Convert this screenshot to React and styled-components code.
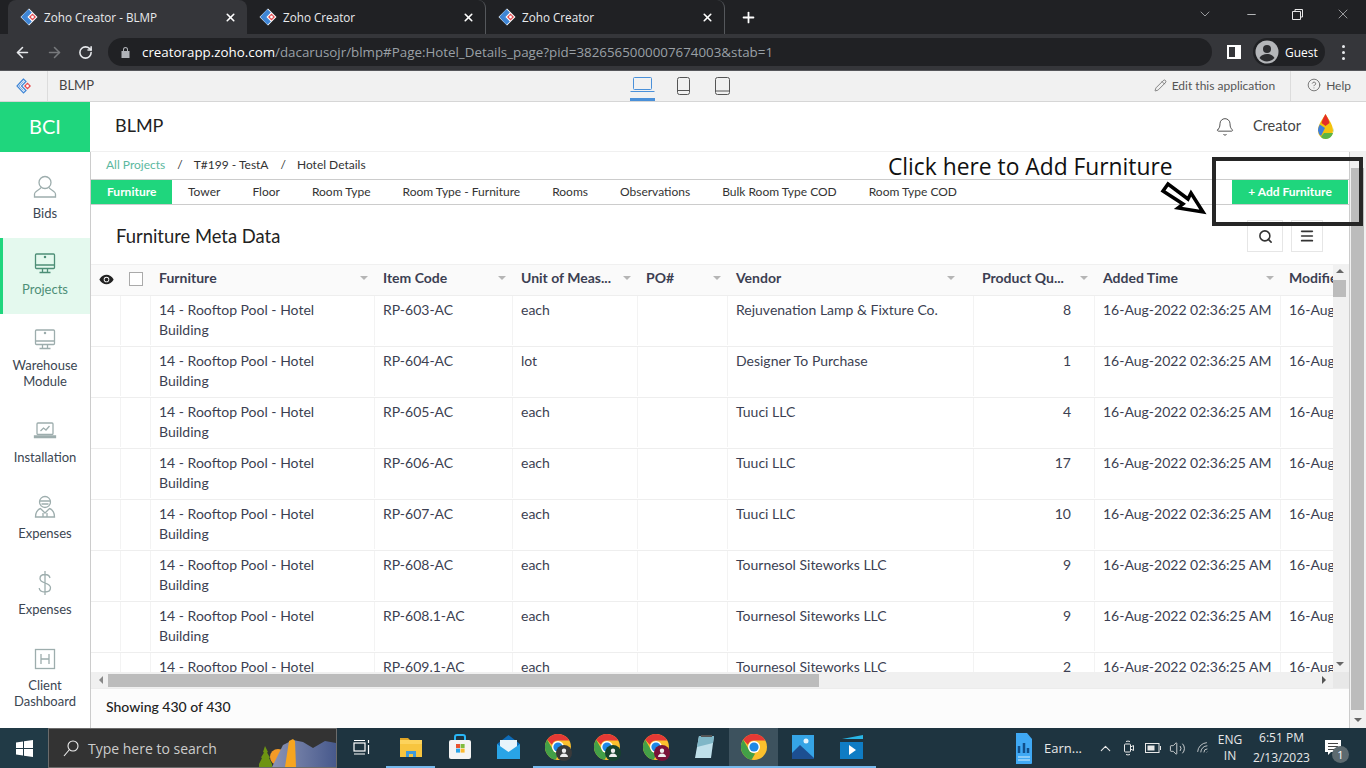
import React from "react";
import styled, { createGlobalStyle } from "styled-components";
import { ArrowLeft, ArrowRight, RotateCw, X, Plus, ChevronDown, Minus, Bell, Search, Menu, Pencil, CircleHelp, ChevronUp, Volume2, Wifi } from "lucide-react";
import { IoEye } from "react-icons/io5";

const GREEN = "#1fd67d";
const UI_FONT = `"Open Sans", "Noto Sans", sans-serif`;
const COLUMNS = "30px 30px 224px 138px 125px 90px 246px 121px 186px 120px";

const Global = createGlobalStyle`
  html, body { margin: 0; padding: 0; height: 100%; overflow: hidden; background: #fff; }
  #root { height: 100%; }
  * { box-sizing: border-box; }
  body { font-family: Lato, "Liberation Sans", sans-serif; }
`;

const Screen = styled.div`
  display: flex;
  flex-direction: column;
  position: relative;
  width: 1366px;
  height: 768px;
  overflow: hidden;
`;

/* browser chrome */
const TabStrip = styled.div`
  display: flex;
  align-items: stretch;
  height: 34px;
  padding-left: 8px;
  background: #202124;
  color: #fff;
  font: 11.7px ${UI_FONT};
`;
const BrowserTab = styled.div`
  display: flex;
  align-items: center;
  width: 239px;
  padding: 0 10px 0 12px;
  gap: 6px;
  background: ${(p) => (p.$active ? "#35363a" : "transparent")};
  border-radius: 8px 8px 0 0;
  border-right: ${(p) => (p.$divider ? "1px solid #55585c" : "none")};
  span { flex: 1; white-space: nowrap; color: #e8eaed; }
`;
const NewTab = styled.div`
  display: flex;
  align-items: center;
  padding-left: 15px;
  flex: 1;
`;
const WindowControls = styled.div`
  display: flex;
  align-items: center;
  color: #d5d7da;
  padding-bottom: 6px;
`;
const WindowButton = styled.div`
  width: 46px;
  display: flex;
  justify-content: center;
`;
const Toolbar = styled.div`
  display: flex;
  align-items: center;
  height: 36px;
  background: #35363a;
  color: #e8eaed;
  padding-left: 14px;
`;
const NavButton = styled.div`
  width: 32px;
  display: flex;
  color: ${(p) => (p.$off ? "#77797c" : "#e8eaed")};
`;
const Omnibox = styled.div`
  display: flex;
  align-items: center;
  width: 1104px;
  height: 28px;
  margin-left: -2px;
  padding-left: 13px;
  gap: 12px;
  border-radius: 14px;
  background: #202124;
  font: 13.35px ${UI_FONT};
  color: #9aa0a6;
  white-space: nowrap;
  b { font-weight: 400; color: #fff; }
`;
const PanelIcon = styled.div`
  width: 14px;
  height: 14px;
  margin-left: 15px;
  border: 2px solid #fff;
  border-right-width: 6px;
`;
const GuestPill = styled.div`
  display: flex;
  align-items: center;
  gap: 6px;
  width: 72px;
  height: 28px;
  margin-left: 12px;
  padding-left: 2px;
  border-radius: 14px;
  background: #202124;
  font: 12px ${UI_FONT};
  color: #fff;
`;
const Kebab = styled.div`
  display: flex;
  flex-direction: column;
  gap: 3px;
  margin-left: 17px;
  i { width: 3px; height: 3px; border-radius: 50%; background: #e8eaed; }
`;

/* zoho app bar */
const AppBar = styled.div`
  display: flex;
  align-items: center;
  height: 32px;
  background: #f1f1f1;
  border-bottom: 1px solid #d6d6d6;
  border-top: 1px solid #55565a;
  font-size: 12px;
  color: #555;
`;
const AppLogoCell = styled.div`
  display: flex;
  align-items: center;
  justify-content: center;
  width: 48px;
  height: 100%;
  border-right: 1px solid #dcdcdc;
`;
const AppName = styled.div`
  margin-left: 11px;
  width: 571px;
  padding-bottom: 2px;
  font-size: 13px;
  color: #444;
`;
const Devices = styled.div`
  display: flex;
  align-items: center;
  gap: 20px;
  height: 100%;
  flex: 1;
`;
const DeviceButton = styled.div`
  display: flex;
  align-items: center;
  justify-content: center;
  height: 100%;
  width: ${(p) => p.$w}px;
  color: ${(p) => (p.$active ? "#4a90d9" : "#555")};
  border-bottom: ${(p) => (p.$active ? "3px solid #4a90d9" : "none")};
`;
const AppAction = styled.div`
  display: flex;
  align-items: center;
  gap: 5px;
  height: 100%;
  padding: 0 15px 2px ${(p) => p.$left || 15}px;
  border-left: ${(p) => (p.$line ? "1px solid #dcdcdc" : "none")};
`;

/* page header */
const PageHeader = styled.div`
  display: flex;
  align-items: center;
  height: 50px;
  border-bottom: 1px solid #f0f0f0;
`;
const Brand = styled.div`
  display: flex;
  align-items: center;
  justify-content: center;
  width: 90px;
  height: 50px;
  padding-bottom: 2px;
  background: ${GREEN};
  color: #fff;
  font-size: 20px;
`;
const HeaderTitle = styled.div`
  flex: 1;
  margin-left: 25px;
  font-size: 18px;
  color: #222;
  padding-bottom: 4px;
`;
const HeaderUser = styled.div`
  display: flex;
  align-items: center;
  padding-right: 32px;
  font-size: 14.5px;
  color: #444;
`;
const UserName = styled.span`
  margin: 0 16px 0 18px;
  padding-bottom: 3px;
`;

const Middle = styled.div`
  display: flex;
  height: 576px;
`;
const Sidebar = styled.nav`
  width: 91px;
  flex: none;
  padding-top: 10px;
  border-right: 1px solid #ccc;
`;
const SideItem = styled.div`
  display: flex;
  flex-direction: column;
  align-items: center;
  padding: 12px ${(p) => (p.$active ? "3px" : "0")} 17px 0;
  gap: 5px;
  text-align: center;
  font-size: 13px;
  line-height: 16px;
  color: ${(p) => (p.$active ? "#4d8f77" : "#3b4652")};
  background: ${(p) => (p.$active ? "#e4f9ee" : "transparent")};
  border-left: ${(p) => (p.$active ? `3px solid ${GREEN}` : "none")};
  svg { flex: none; }
`;

const Content = styled.main`
  display: flex;
  flex-direction: column;
  width: 1258px;
  flex: none;
`;
const Crumbs = styled.div`
  display: flex;
  align-items: center;
  height: 27px;
  padding: 0 0 2px 15px;
  font-size: 12px;
  color: #333;
`;
const CrumbLink = styled.span`
  color: #5bb8a0;
`;
const CrumbSep = styled.span`
  margin: 0 11px 0 12px;
`;
const TabRow = styled.div`
  display: flex;
  align-items: stretch;
  height: 26px;
  border-top: 1px solid #ccc;
  border-bottom: 1px solid #ccc;
  font-size: 12px;
  color: #333;
`;
const PageTab = styled.div`
  display: flex;
  align-items: center;
  padding: 0 16px 1px;
  width: ${(p) => (p.$active ? "81px" : "auto")};
  white-space: nowrap;
  background: ${(p) => (p.$active ? GREEN : "transparent")};
  color: ${(p) => (p.$active ? "#fff" : "#333")};
  font-weight: ${(p) => (p.$active ? 700 : 400)};
`;
const AddButton = styled.div`
  display: flex;
  align-items: center;
  justify-content: center;
  margin-left: auto;
  margin-right: 1px;
  width: 116px;
  padding-bottom: 1px;
  background: ${GREEN};
  color: #fff;
  font-weight: 700;
`;
const TitleRow = styled.div`
  display: flex;
  align-items: center;
  height: 59px;
  padding: 0 26px 0 25px;
  gap: 8px;
`;
const TableTitle = styled.h1`
  flex: 1;
  margin: 2px 0 0;
  font-size: 18.4px;
  font-weight: 400;
  color: #222;
`;
const SquareButton = styled.div`
  display: flex;
  align-items: center;
  justify-content: center;
  width: ${(p) => p.$w}px;
  height: 32px;
  margin-top: 3px;
  border: 1px solid #e6e6e6;
  color: #333;
`;

const TableArea = styled.div`
  display: grid;
  grid-template-columns: 1242px 16px;
  grid-template-rows: 408px 16px;
  height: 424px;
`;
const TableClip = styled.div`
  overflow: hidden;
`;
const HeadRow = styled.div`
  display: grid;
  grid-template-columns: ${COLUMNS};
  height: 31px;
  background: #fafafa;
  border-top: 1px solid #f0f0f0;
  font-size: 14px;
  font-weight: 700;
  color: #3c3f52;
`;
const HeadCell = styled.div`
  position: relative;
  display: flex;
  align-items: center;
  padding: 0 0 5px 8px;
  white-space: nowrap;
  overflow: hidden;
  &::after {
    content: "";
    display: ${(p) => (p.$plain ? "none" : "block")};
    position: absolute;
    right: ${(p) => p.$caret || 7}px;
    top: 11px;
    border: 4px solid transparent;
    border-top-color: #b5b5b5;
    border-bottom: none;
  }
`;
const IconCell = styled.div`
  display: flex;
  align-items: center;
  justify-content: center;
  padding-bottom: 2px;
  color: #222;
`;
const CheckBox = styled.div`
  width: 14px;
  height: 14px;
  border: 1px solid #aaa;
  background: #fff;
`;
const Row = styled.div`
  display: grid;
  grid-template-columns: ${COLUMNS};
  height: 51px;
  border-top: 1px solid #eee;
  border-bottom: 1px solid transparent;
  font-size: 14px;
  line-height: 20px;
  color: #3c3f52;
`;
const Cell = styled.div`
  padding: 4px 8px 0;
  border-right: 1px solid #f3f3f3;
  white-space: ${(p) => (p.$nowrap ? "nowrap" : "normal")};
  overflow: hidden;
  text-align: ${(p) => (p.$right ? "right" : "left")};
  padding-right: ${(p) => (p.$right ? "23px" : "8px")};
`;
const VBar = styled.div`
  display: flex;
  flex-direction: column;
  align-items: stretch;
  background: #f1f1f1;
  padding-right: 3px;
`;
const HBar = styled.div`
  display: flex;
  align-items: center;
  background: #f0f0f0;
  height: 16px;
`;
const Corner = styled.div`
  background: #e8e8e8;
`;
const Thumb = styled.div`
  background: #bcbcbc;
  width: ${(p) => p.$w || "auto"};
  height: ${(p) => p.$h || "auto"};
`;
const Tri = styled.i`
  display: block;
  width: 0;
  height: 0;
  border: 4px solid transparent;
  ${(p) => p.$dir === "up" && "border-bottom-color:#666;border-top:none;margin:5px auto 7px;"}
  ${(p) => p.$dir === "down" && "border-top-color:#666;border-bottom:none;margin:auto auto 6px;"}
  ${(p) => p.$dir === "left" && "border-right-color:#888;border-left:none;margin:0 5px 0 8px;"}
  ${(p) => p.$dir === "right" && "border-left-color:#555;border-right:none;margin-left:503px;"}
`;
const Footer = styled.div`
  display: flex;
  align-items: center;
  height: 40px;
  padding: 0 0 5px 15px;
  background: #fcfcfc;
  border-top: 1px solid #ececec;
  font-size: 14px;
  font-weight: 500;
  color: #222;
`;
const PageScroll = styled.div`
  display: flex;
  flex-direction: column;
  width: 17px;
  background: #f1f1f1;
  border-left: 1px solid #ccc;
  padding: 0 2px 0 1px;
`;

/* taskbar */
const Taskbar = styled.footer`
  display: flex;
  align-items: stretch;
  height: 40px;
  background: #1e3440;
  color: #fff;
  font: 12px ${UI_FONT};
`;
const StartButton = styled.div`
  display: flex;
  align-items: center;
  justify-content: center;
  width: 48px;
  background: #213a46;
`;
const SearchBox = styled.div`
  display: flex;
  align-items: center;
  width: 289px;
  padding-left: 14px;
  gap: 9px;
  background: #333;
  border: 1px solid #6b6b6b;
  font-size: 14px;
  color: #ccc;
  overflow: hidden;
  span { flex: 1; white-space: nowrap; }
  svg:last-child { flex: none; }
`;
const TaskItem = styled.div`
  display: flex;
  align-items: center;
  justify-content: center;
  width: 49px;
  background: ${(p) => (p.$focused ? "#3d525e" : "transparent")};
  border-bottom: 2px solid ${(p) => (p.$running ? "#76b9ed" : "transparent")};
  background-clip: padding-box;
`;
const Tray = styled.div`
  display: flex;
  align-items: center;
  margin-left: auto;
  color: #e8e8e8;
`;
const DocItem = styled.div`
  display: flex;
  align-items: center;
  gap: 11px;
  width: 78px;
  font-size: 13px;
  white-space: nowrap;
`;
const TrayIcon = styled.div`
  display: flex;
  justify-content: center;
  width: ${(p) => p.$w || 24}px;
`;
const TrayText = styled.div`
  text-align: center;
  line-height: ${(p) => p.$lh}px;
  width: ${(p) => p.$w}px;
  white-space: nowrap;
`;
const Notice = styled.div`
  position: relative;
  display: flex;
  width: 46px;
  padding-left: 5px;
`;
const NoticeBadge = styled.span`
  position: absolute;
  left: 12px;
  bottom: -7px;
  width: 17px;
  height: 17px;
  border-radius: 50%;
  background: #5d6a70;
  color: #fff;
  font-size: 11px;
  line-height: 17px;
  text-align: center;
`;

/* annotations drawn over the screenshot */
const CalloutBox = styled.div`
  position: absolute;
  left: 1212px;
  top: 157px;
  width: 151px;
  height: 69px;
  border: 4px solid #262626;
  pointer-events: none;
`;
const CalloutText = styled.div`
  position: absolute;
  left: 888px;
  top: 151px;
  font: 22.8px ${UI_FONT};
  color: #111;
  white-space: nowrap;
`;
const CalloutArrow = styled.svg`
  position: absolute;
  left: 1158px;
  top: 181px;
`;

const ZohoMark = ({ onDark }) => (
  <svg width="18" height="18" viewBox="0 0 18 18">
    {onDark && <path d="M9 .5 17.500 9 9 17.500.5 9z" fill="#fff" />}
    <path d="M8.500 2 2 9l6.500 7 2.500-2.500L6.500 9 11 4.500z" fill={onDark ? "#3f86d6" : "#eef3fa"} stroke="#3f86d6" strokeWidth="1.200" />
    {!onDark && <path d="M8.500 4.500 4 9l4.500 4.500" fill="none" stroke="#8fb6e0" />}
    <path d="M12.500 5.500 16 9l-3.500 3.500L9 9z" fill="#e5484d" />
    <circle cx="12.500" cy="9" r="1.400" fill="#fff" />
  </svg>
);

const ChromeLogo = ({ size = 28, badge }) => (
  <svg width={size} height={size} viewBox="0 0 28 28">
    <circle cx="14" cy="14" r="13" fill="#fbc02d" />
    <path d="M14 1a13 13 0 0 1 11.300 6.500H14a6.500 6.500 0 0 0-6.100 4.300L3.200 6.700A13 13 0 0 1 14 1z" fill="#e53935" />
    <path d="M3.200 6.700l5.600 9.900a6.500 6.500 0 0 0 6.400 3.800l-3.600 6.400A13 13 0 0 1 3.200 6.700z" fill="#43a047" />
    <circle cx="14" cy="14" r="6" fill="#fff" />
    <circle cx="14" cy="14" r="4.600" fill="#1e88e5" />
    {badge && <circle cx="20" cy="20" r="8" fill={badge} />}
    {badge && <path d="M20 15.500a2.200 2.200 0 1 1 0 4.400 2.200 2.200 0 0 1 0-4.400zM16 24c0-2.200 1.800-3.400 4-3.400s4 1.200 4 3.400z" fill="#eee" />}
  </svg>
);

const Line = ({ w = 26, h = 26, vb = "0 0 26 26", color = "#9dadad", children }) => (
  <svg width={w} height={h} viewBox={vb} fill="none" stroke={color} strokeWidth="1.300">{children}</svg>
);

const Monitor = ({ color }) => (
  <Line color={color}>
    <rect x="3.500" y="4" width="19" height="14.500" rx="1" />
    <path d="M3.500 15h19M10.500 18.500v4M15.500 18.500v4M7.500 22.500h11" />
    <circle cx="13" cy="7" r=".6" />
  </Line>
);

const NAV = [
  { label: "Bids", icon: <Line><circle cx="13" cy="8.500" r="6" /><path d="M9 13.500c-1 2.500-6.500 3-6.500 7v2.500h21v-2.500c0-4-5.500-4.500-6.500-7" /></Line> },
  { label: "Projects", active: true, icon: <Monitor color="#4d8f77" /> },
  { label: "Warehouse Module", icon: <Monitor /> },
  { label: "Installation", icon: <Line><rect x="5" y="5" width="16" height="11.500" rx="1" /><path d="M2.500 19.500h21v-1.500h-21zM8.500 13l3-3 2.500 2 3.500-4" /></Line> },
  { label: "Expenses", icon: <Line><circle cx="13" cy="8" r="5.500" /><path d="M7.500 7h11M9.500 10h7M8.500 14.500c-2 1-5 2-5 8.500h19c0-6.500-3-7.500-5-8.500l-4.500 4.500zM11 19v4M15 19v4" /></Line> },
  { label: "Expenses", icon: <Line><path d="M18 8c-.5-2.500-2.500-3.500-5-3.500-3 0-5 1.500-5 4s2 3.500 5 4.500 5.500 2 5.500 4.800c0 2.700-2.500 4.200-5.500 4.200s-5.500-1.300-5.800-4M13 1v24" /></Line> },
  { label: "Client Dashboard", icon: <Line><rect x="3.500" y="3.500" width="19" height="19" /><path d="M9 8v10M17 8v10M9 13h8" /></Line> },
];

const ROWS = [
  ["RP-603-AC", "each", "Rejuvenation Lamp & Fixture Co.", 8],
  ["RP-604-AC", "lot", "Designer To Purchase", 1],
  ["RP-605-AC", "each", "Tuuci LLC", 4],
  ["RP-606-AC", "each", "Tuuci LLC", 17],
  ["RP-607-AC", "each", "Tuuci LLC", 10],
  ["RP-608-AC", "each", "Tournesol Siteworks LLC", 9],
  ["RP-608.1-AC", "each", "Tournesol Siteworks LLC", 9],
  ["RP-609.1-AC", "each", "Tournesol Siteworks LLC", 2],
];

const TABS = ["Tower", "Floor", "Room Type", "Room Type - Furniture", "Rooms", "Observations", "Bulk Room Type COD", "Room Type COD"];
const HEADS = [
  { label: "Furniture" },
  { label: "Item Code" },
  { label: "Unit of Meas..." },
  { label: "PO#" },
  { label: "Vendor", caret: 19 },
  { label: "Product Qu..." },
  { label: "Added Time" },
];

const Folder = () => (
  <svg width="24" height="22" viewBox="0 0 24 22">
    <path d="M1 2h8l2 2H1z" fill="#e0a526" />
    <rect x="1" y="4" width="22" height="17" fill="#fcd35c" />
    <rect x="1" y="8" width="22" height="13" fill="#f7c53f" />
    <path d="M7 15h10v6h-3v-3h-4v3H7z" fill="#3f9bdc" />
  </svg>
);
const Store = () => (
  <svg width="24" height="26" viewBox="0 0 24 26">
    <path d="M7 6V3a2 2 0 0 1 2-2h6a2 2 0 0 1 2 2v3" fill="none" stroke="#29b6f6" strokeWidth="2" />
    <rect x="1" y="6" width="22" height="19" rx="2" fill="#f4f4f4" />
    <rect x="8" y="10" width="4" height="4" fill="#e9532f" /><rect x="12.600" y="10" width="4" height="4" fill="#7fbb3f" />
    <rect x="8" y="14.600" width="4" height="4" fill="#2aa4e8" /><rect x="12.600" y="14.600" width="4" height="4" fill="#fbb92f" />
  </svg>
);
const Mail = () => (
  <svg width="25" height="26" viewBox="0 0 25 26">
    <path d="M12.500 1 24 10v15H1V10z" fill="#0d6cb9" />
    <rect x="4" y="6" width="17" height="13" fill="#e8f4fb" />
    <path d="M1 10l11.500 8L24 10v15H1z" fill="#29a4e6" />
  </svg>
);
const Notepad = () => (
  <svg width="24" height="26" viewBox="0 0 24 26">
    <path d="M6 2h15l-3 22H2z" fill="#bfe0ea" />
    <path d="M6 2h15l-1 7-16 4z" fill="#7fb7c7" />
    <path d="M8 2h11" stroke="#555" strokeWidth="2" />
  </svg>
);
const Photos = () => (
  <svg width="24" height="26" viewBox="0 0 24 26">
    <rect x="1" y="1" width="22" height="24" fill="#35a4e6" />
    <circle cx="15" cy="7" r="2.500" fill="#e6f4fc" />
    <path d="M1 19l8-8 14 13v1H1z" fill="#1d4f91" />
  </svg>
);
const Movies = () => (
  <svg width="25" height="26" viewBox="0 0 25 26">
    <path d="M3 5 24 1v4H3z" fill="#29b6e6" />
    <path d="M1 8h23v17H1z" fill="#0f7cc4" />
    <path d="M10 11v10l7-5z" fill="#fff" />
  </svg>
);
const TaskView = () => (
  <svg width="18" height="17" viewBox="0 0 18 17" fill="none" stroke="#fff" strokeWidth="1.200">
    <rect x="1" y="4" width="11" height="8" />
    <path d="M1 1.500h11M1 15h11M15.500 1v3M15.500 6v9" />
  </svg>
);
const SearchArt = () => (
  <svg width="77" height="38" viewBox="0 0 77 38">
    <defs>
      <linearGradient id="rock" x1="0" x2="1" y1="0" y2="0">
        <stop offset="0" stopColor="#8a93b5" />
        <stop offset="1" stopColor="#47598c" />
      </linearGradient>
    </defs>
    <circle cx="19" cy="28" r="8" fill="#f39a26" />
    <path d="M13 38 24 16l10-5 10 2 10 6 12-7 11 2v24z" fill="url(#rock)" />
    <path d="M30 12l4-2 2 2 1 26h-11z" fill="#f7a51f" />
    <path d="M6 17l3 6 -1 .5 3 5-1 .5 3 6v3H0v-3l3-6-1-.5 3-5-1-.5z" fill="#6d9412" />
  </svg>
);

export default function App() {
  return (
    <Screen>
      <Global />
      <TabStrip>
        <BrowserTab $active><ZohoMark onDark /><span>Zoho Creator - BLMP</span><X size={13} strokeWidth={3} /></BrowserTab>
        <BrowserTab $divider><ZohoMark onDark /><span>Zoho Creator</span><X size={13} strokeWidth={3} /></BrowserTab>
        <BrowserTab $divider><ZohoMark onDark /><span>Zoho Creator</span><X size={13} strokeWidth={3} /></BrowserTab>
        <NewTab><Plus size={17} strokeWidth={2.500} /></NewTab>
        <WindowControls>
          <WindowButton><ChevronDown size={16} strokeWidth={1} /></WindowButton>
          <WindowButton><Minus size={13} strokeWidth={1.500} /></WindowButton>
          <WindowButton>
            <svg width="11" height="11" viewBox="0 0 11 11" fill="none" stroke="#e8e8e8"><path d="M3 2.500V.5h7.500V8H8.500M.5 2.500h8v8h-8z" /></svg>
          </WindowButton>
          <WindowButton><X size={16} strokeWidth={1} /></WindowButton>
        </WindowControls>
      </TabStrip>

      <Toolbar>
        <NavButton><ArrowLeft size={17} strokeWidth={2.200} /></NavButton>
        <NavButton $off><ArrowRight size={17} strokeWidth={2.200} /></NavButton>
        <NavButton><RotateCw size={15} strokeWidth={2.500} /></NavButton>
        <Omnibox>
          <svg width="9" height="12" viewBox="0 0 9 12"><path d="M2 5V3.500a2.500 2.500 0 0 1 5 0V5h1.500v7H.5V5zm1 0h3V3.500a1.500 1.500 0 0 0-3 0z" fill="#b0b3b8" /></svg>
          <div><b>creatorapp.zoho.com</b>/dacarusojr/blmp#Page:Hotel_Details_page?pid=3826565000007674003&amp;stab=1</div>
        </Omnibox>
        <PanelIcon />
        <GuestPill>
          <svg width="24" height="24" viewBox="0 0 24 24"><circle cx="12" cy="12" r="11.500" fill="#b4b6b9" /><circle cx="12" cy="9" r="4" fill="#2b2c2f" /><path d="M4.500 18c1.500-3 4.500-4 7.500-4s6 1 7.500 4a10 10 0 0 1-15 0z" fill="#2b2c2f" /></svg>
          Guest
        </GuestPill>
        <Kebab><i /><i /><i /></Kebab>
      </Toolbar>

      <AppBar>
        <AppLogoCell><ZohoMark /></AppLogoCell>
        <AppName>BLMP</AppName>
        <Devices>
          <DeviceButton $active $w={25}>
            <svg width="25" height="17" viewBox="0 0 25 17" fill="none" stroke="currentColor"><rect x="3.500" y="1.500" width="18" height="12" rx="1" /><path d="M.5 15.500h24" /></svg>
          </DeviceButton>
          <DeviceButton $w={16}>
            <svg width="13" height="18" viewBox="0 0 13 18" fill="none" stroke="currentColor"><rect x=".5" y=".5" width="12" height="17" rx="2" /><path d="M.5 13.500h12" /></svg>
          </DeviceButton>
          <DeviceButton $w={22}>
            <svg width="15" height="18" viewBox="0 0 15 18" fill="none" stroke="currentColor"><rect x=".5" y=".5" width="14" height="17" rx="2" /><path d="M.5 14h14" /></svg>
          </DeviceButton>
        </Devices>
        <AppAction><Pencil size={13} strokeWidth={1.300} />Edit this application</AppAction>
        <AppAction $line $left={16}><CircleHelp size={14} strokeWidth={1.300} />Help</AppAction>
      </AppBar>

      <PageHeader>
        <Brand>BCI</Brand>
        <HeaderTitle>BLMP</HeaderTitle>
        <HeaderUser>
          <Bell size={20} strokeWidth={1.100} />
          <UserName>Creator</UserName>
          <svg width="17" height="26" viewBox="0 0 17 26">
            <path d="M8.500 0C6.500 4 1 10 1 16.500a7.500 8.500 0 0 0 15 0C16 10 10.500 4 8.500 0z" fill="#f4c20d" />
            <path d="M8.500 0C7 3 5 6 4.500 9l4 3 4-3C12 6 10 3 8.500 0z" fill="#e52d27" />
            <path d="M1 16.500c0-2 .8-4 1.800-6L8 14 4 22a8 8 0 0 1-3-5.500z" fill="#3f7fdc" />
            <path d="M16 14a7.500 8.500 0 0 1-7.500 11c-2 0-3.500-.8-4.500-2l3-4h9z" fill="#5cb547" />
          </svg>
        </HeaderUser>
      </PageHeader>

      <Middle>
        <Sidebar>
          {NAV.map((item, i) => (
            <SideItem key={i} $active={item.active}>{item.icon}<div>{item.label}</div></SideItem>
          ))}
        </Sidebar>
        <Content>
          <Crumbs>
            <CrumbLink>All Projects</CrumbLink><CrumbSep>/</CrumbSep>T#199 - TestA<CrumbSep>/</CrumbSep>Hotel Details
          </Crumbs>
          <TabRow>
            <PageTab $active>Furniture</PageTab>
            {TABS.map((t) => <PageTab key={t}>{t}</PageTab>)}
            <AddButton>+ Add Furniture</AddButton>
          </TabRow>
          <TitleRow>
            <TableTitle>Furniture Meta Data</TableTitle>
            <SquareButton $w={36}><Search size={15} strokeWidth={2.500} /></SquareButton>
            <SquareButton $w={32}><Menu size={16} strokeWidth={2.500} /></SquareButton>
          </TitleRow>
          <TableArea>
            <TableClip>
              <HeadRow>
                <IconCell><IoEye size={15} /></IconCell>
                <IconCell><CheckBox /></IconCell>
                {HEADS.map((h) => <HeadCell key={h.label} $caret={h.caret}>{h.label}</HeadCell>)}
                <HeadCell $plain>Modified Time</HeadCell>
              </HeadRow>
              {ROWS.map((r) => (
                <Row key={r[0]}>
                  <Cell />
                  <Cell />
                  <Cell>14 - Rooftop Pool - Hotel Building</Cell>
                  <Cell>{r[0]}</Cell>
                  <Cell>{r[1]}</Cell>
                  <Cell />
                  <Cell>{r[2]}</Cell>
                  <Cell $right>{r[3]}</Cell>
                  <Cell $nowrap>16-Aug-2022 02:36:25 AM</Cell>
                  <Cell $nowrap>16-Aug-2022 02:36:25 AM</Cell>
                </Row>
              ))}
            </TableClip>
            <VBar>
              <Tri $dir="up" />
              <Thumb $h="17px" />
              <Tri $dir="down" />
            </VBar>
            <HBar>
              <Tri $dir="left" />
              <Thumb $w="711px" $h="13px" />
              <Tri $dir="right" />
            </HBar>
            <Corner />
          </TableArea>
          <Footer>Showing 430 of 430</Footer>
        </Content>
        <PageScroll>
          <Tri $dir="up" />
          <Thumb $h="542px" />
          <Tri $dir="down" />
        </PageScroll>
      </Middle>

      <Taskbar>
        <StartButton>
          <svg width="17" height="17" viewBox="0 0 17 17" fill="#fff"><path d="M0 2.400 7 1.400V8H0zM8 1.300 17 0v8H8zM0 9h7v6.600l-7-1zM8 9h9v8l-9-1.300z" /></svg>
        </StartButton>
        <SearchBox>
          <svg width="16" height="17" viewBox="0 0 16 17" fill="none" stroke="#eee" strokeWidth="1.100"><circle cx="10" cy="6" r="5" /><path d="M6.500 9.500 1 16" /></svg>
          <span>Type here to search</span>
          <SearchArt />
        </SearchBox>
        <TaskItem><TaskView /></TaskItem>
        <TaskItem $running><Folder /></TaskItem>
        <TaskItem><Store /></TaskItem>
        <TaskItem><Mail /></TaskItem>
        <TaskItem $running><ChromeLogo badge="#3a3a3a" /></TaskItem>
        <TaskItem $running><ChromeLogo badge="#16432e" /></TaskItem>
        <TaskItem $running><ChromeLogo badge="#7a1238" /></TaskItem>
        <TaskItem $running><Notepad /></TaskItem>
        <TaskItem $running $focused><ChromeLogo /></TaskItem>
        <TaskItem $running><Photos /></TaskItem>
        <TaskItem $running><Movies /></TaskItem>
        <Tray>
          <DocItem>
            <svg width="18" height="31" viewBox="0 0 18 31"><path d="M1 0h11l5 6v24a1 1 0 0 1-1 1H1z" fill="#3fa9f5" /><path d="M3 24h12M3 27h12" stroke="#d6eefc" /><path d="M4 20v-7M9 20v-10M13 20v-5" stroke="#114f8a" strokeWidth="2.500" /></svg>
            Earn...
          </DocItem>
          <TrayIcon><ChevronUp size={17} strokeWidth={1.500} /></TrayIcon>
          <TrayIcon>
            <svg width="12" height="18" viewBox="0 0 12 18" fill="none" stroke="#e8e8e8"><rect x="1.500" y="5" width="6" height="8" rx="1" /><path d="M7.500 8l3-1.500v5l-3-1.500M3 2.500a5 5 0 0 1 4 0M3 15.500a5 5 0 0 0 4 0" /></svg>
          </TrayIcon>
          <TrayIcon>
            <svg width="16" height="10" viewBox="0 0 16 10" fill="none" stroke="#e8e8e8"><rect x=".5" y=".5" width="13.500" height="9" /><rect x="2.500" y="2.500" width="7" height="5" fill="#e8e8e8" stroke="none" /><path d="M15.500 3v4" /></svg>
          </TrayIcon>
          <TrayIcon><Volume2 size={17} strokeWidth={1.200} /></TrayIcon>
          <TrayIcon $w={28}><Wifi size={15} strokeWidth={1.200} style={{ transform: "rotate(-45deg)" }} /></TrayIcon>
          <TrayText $w={26} $lh={16}>ENG<br />IN</TrayText>
          <TrayText $w={77} $lh={20}>6:51 PM<br />2/13/2023</TrayText>
          <Notice>
            <svg width="16" height="16" viewBox="0 0 16 16"><path d="M0 0h16v12H6l-3 3v-3H0z" fill="#fff" /><path d="M3 3.500h10M3 6.500h10M3 9.500h7" stroke="#444" /></svg>
            <NoticeBadge>1</NoticeBadge>
          </Notice>
        </Tray>
      </Taskbar>

      <CalloutBox />
      <CalloutText>Click here to Add Furniture</CalloutText>
      <CalloutArrow width="50" height="36" viewBox="0 0 50 36">
        <path d="M5 10 10 3l20 15 3-6 12 19-25-4 5-4z" fill="#fff" stroke="#000" strokeWidth="3.500" />
      </CalloutArrow>
    </Screen>
  );
}
